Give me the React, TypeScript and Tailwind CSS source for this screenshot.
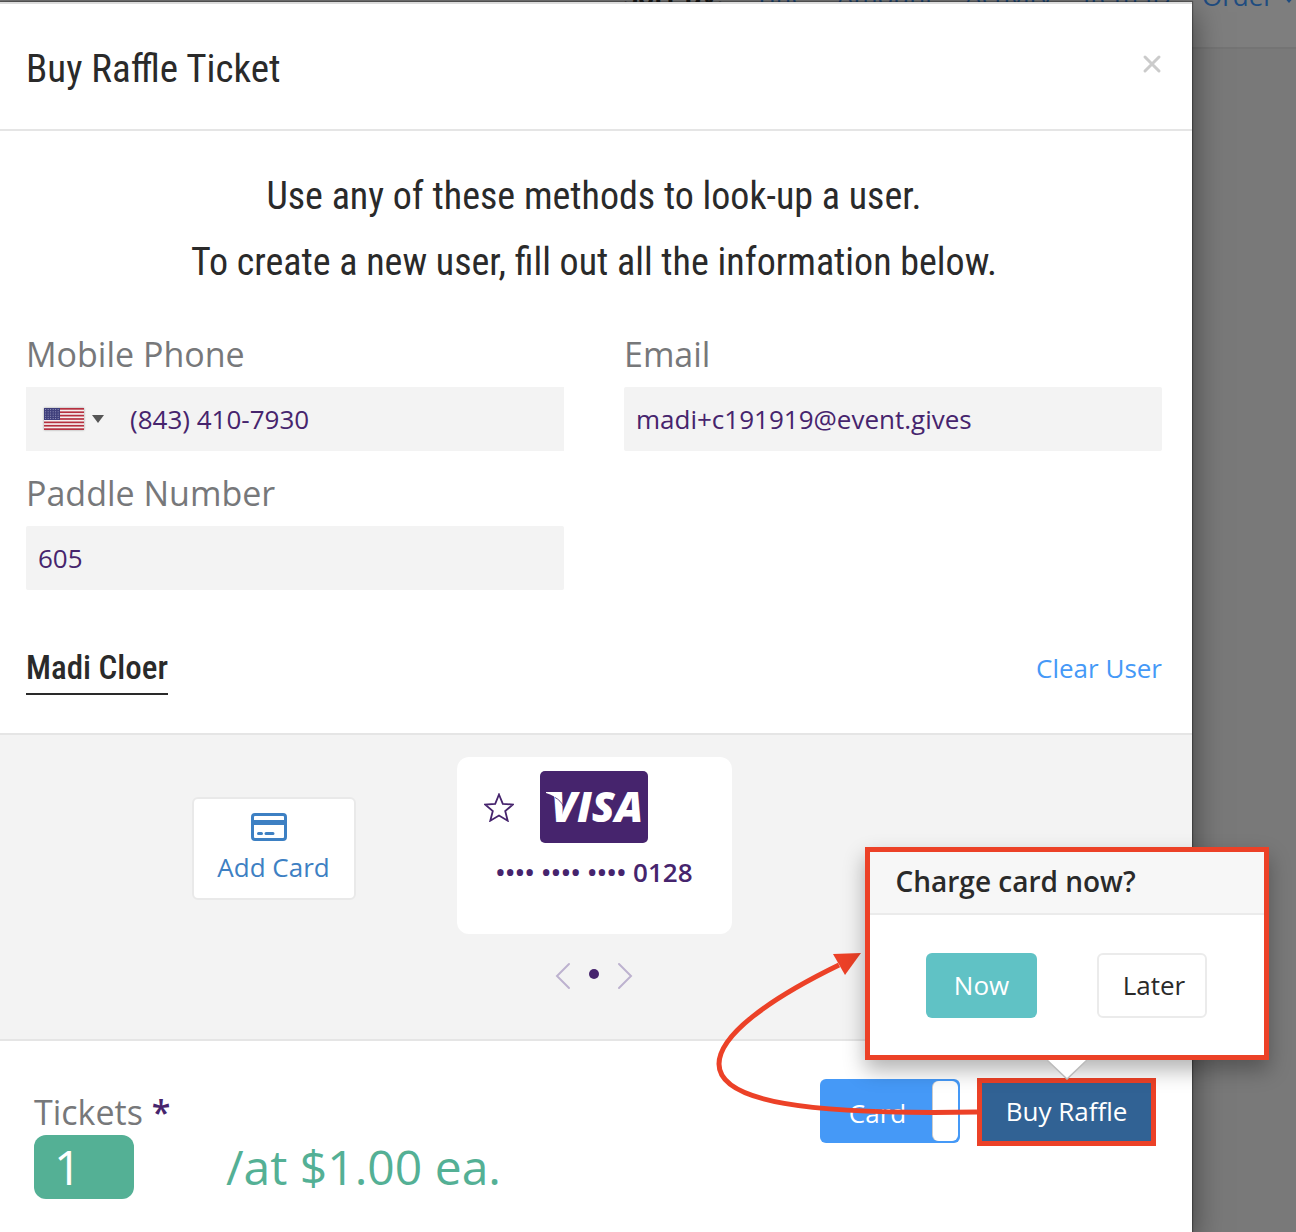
import { useState } from 'react';

const sortLinks = ['Title', 'Amount', 'Activity', 'Item ID', 'Order'];

const fieldClass = 'h-16 w-full rounded-xs bg-[#f3f3f3] px-3 text-[26px] text-[#46246d] outline-none';
const labelClass = 'block text-[34px] leading-[46px] text-[#77787a]';

function FlagUS() {
  return (
    <svg viewBox="0 0 40 22" className="h-[22px] w-10 shadow-[0_0_2px_#999]" aria-hidden="true">
      <rect width="40" height="22" fill="#f5f0f0" />
      {[0, 1, 2, 3, 4, 5, 6].map((i) => (
        <rect key={i} y={i * 3.38} width="40" height="1.7" fill="#b5303f" />
      ))}
      <rect width="16" height="12" fill="#40407c" />
      {[0, 1, 2, 3, 4].map((row) =>
        [0, 1, 2, 3, 4, 5].map((col) => (
          <circle key={`${row}-${col}`} cx={1.6 + col * 2.5} cy={1.4 + row * 2.3} r="0.5" fill="#a9a9cc" />
        ))
      )}
    </svg>
  );
}

function CardIcon() {
  return (
    <svg viewBox="0 0 36 28" className="mr-2.5 h-7 w-9" fill="none" aria-hidden="true">
      <rect x="1.5" y="1.5" width="33" height="25" rx="2.5" stroke="#3d80c3" strokeWidth="3" />
      <path d="M2 9.5h32" stroke="#3d80c3" strokeWidth="5" />
      <path d="M7.5 20.5h3M15 20.5h7" stroke="#3d80c3" strokeWidth="3" strokeLinecap="round" />
    </svg>
  );
}

function StarIcon() {
  return (
    <svg viewBox="0 0 30 29" className="h-[29px] w-[30px]" fill="none" aria-hidden="true">
      <path
        d="M15 1.5l3.8 9.3 10.2.7-7.8 6.6 2.5 9.6L15 22.5l-8.7 5.2 2.5-9.6L1 11.5l10.2-.7z"
        stroke="#46246d"
        strokeWidth="1.8"
        strokeLinejoin="miter"
      />
    </svg>
  );
}

function VisaLogo() {
  return (
    <svg viewBox="0 0 108 72" className="h-[72px] w-[108px]" role="img" aria-label="Visa">
      <rect width="108" height="72" rx="5" fill="#46246d" />
      <text x="11" y="51" fill="#fff" className="font-['Open_Sans',sans-serif] text-[42px] font-extrabold italic">
        VISA
      </text>
      <path d="M6 21h13v9c-3-4-7-6-13-8z" fill="#fff" />
      <path d="M15 26.500c4 2 6.500 5 8.500 9" stroke="#46246d" strokeWidth="0.8" fill="none" />
    </svg>
  );
}

function Chevron({ flip }: { flip?: boolean }) {
  return (
    <svg viewBox="0 0 16 28" className="h-7 w-4" fill="none" aria-hidden="true">
      <path d={flip ? 'M2 2l12 12L2 26' : 'M14 2L2 14l12 12'} stroke="#bdb2cf" strokeWidth="2" strokeLinecap="round" />
    </svg>
  );
}

export default function App() {
  const [phone, setPhone] = useState('(843) 410-7930');
  const [email, setEmail] = useState('madi+c191919@event.gives');
  const [paddle, setPaddle] = useState('605');
  const [tickets, setTickets] = useState('1');
  const [payByCard, setPayByCard] = useState(true);

  return (
    <div className="relative flex min-h-screen flex-col overflow-hidden bg-[#797979] font-['Open_Sans',sans-serif] text-[#2a2a2a]">
      {/* Page behind the modal, scrolled under the top edge */}
      <div className="absolute inset-x-0 top-0 flex h-[49px] justify-end overflow-hidden border-b-2 border-[#747474] bg-[#7e7e7e] pr-px text-[26px] leading-9">
        <div className="-mt-[22px] flex gap-[31px]">
          <span className="font-bold text-[#1a1a1a]">Sort By:</span>
          {sortLinks.map((link) => (
            <a key={link} href="#" className="text-[#1f4c80]">
              {link}
            </a>
          ))}
        </div>
        <svg viewBox="0 0 12 7" className="-mt-1 ml-[9px] h-[7px] w-3" aria-hidden="true">
          <path d="M0 0h12L6 7z" fill="#1f4c80" />
        </svg>
      </div>

      {/* Modal */}
      <div
        role="dialog"
        aria-label="Buy Raffle Ticket"
        className="relative mt-0.5 mr-[104px] flex-1 border-t-2 border-[#dcdcdc] bg-white shadow-[0_10px_30px_rgba(0,0,0,0.5),0_0_1px_1px_rgba(0,0,0,0.3)]"
      >
        {/* Header */}
        <div className="flex h-[127px] items-center justify-between border-b-2 border-[#e5e5e5] pr-[30px] pl-[26px]">
          <h1 className="pt-1.5 font-['Roboto_Condensed','Roboto',sans-serif] text-[39px]">Buy Raffle Ticket</h1>
          <button type="button" aria-label="Close" className="mb-1.5 text-[#cbcbcb]">
            <svg viewBox="0 0 20 20" className="size-5" fill="none" aria-hidden="true">
              <path d="M3 3l14 14M17 3L3 17" stroke="currentColor" strokeWidth="3" strokeLinecap="round" />
            </svg>
          </button>
        </div>

        {/* User lookup */}
        <div className="border-b-2 border-[#e5e5e5] pt-8 pr-[30px] pb-[38px] pl-[26px]">
          <p className="text-center font-['Roboto_Condensed','Roboto',sans-serif] text-[38px] leading-[66px]">
            Use any of these methods to look-up a user.
            <br />
            To create a new user, fill out all the information below.
          </p>

          <div className="mt-9 grid grid-cols-2 gap-x-[60px] gap-y-[19px]">
            <div>
              <label htmlFor="phone" className={`${labelClass} mb-2.5`}>
                Mobile Phone
              </label>
              <div className="flex h-16 items-center bg-[#f3f3f3] pl-[18px]">
                <div className="relative flex items-center gap-2">
                  <FlagUS />
                  <svg viewBox="0 0 12 8" className="h-2 w-3" aria-hidden="true">
                    <path d="M0 0h12L6 8z" fill="#555" />
                  </svg>
                  <select aria-label="Country" className="absolute inset-0 opacity-0">
                    <option>US</option>
                  </select>
                </div>
                <input
                  id="phone"
                  type="tel"
                  value={phone}
                  onChange={(e) => setPhone(e.target.value)}
                  className="ml-[26px] min-w-0 flex-1 text-[26px] text-[#46246d] outline-none"
                />
              </div>
            </div>
            <div>
              <label htmlFor="email" className={`${labelClass} mb-2.5`}>
                Email
              </label>
              <input id="email" type="email" value={email} onChange={(e) => setEmail(e.target.value)} className={fieldClass} />
            </div>
            <div>
              <label htmlFor="paddle" className={`${labelClass} mb-2.5`}>
                Paddle Number
              </label>
              <input id="paddle" type="text" value={paddle} onChange={(e) => setPaddle(e.target.value)} className={fieldClass} />
            </div>
          </div>

          <div className="mt-[53px] flex items-center justify-between">
            <h2 className="border-b-2 border-[#2a2a2a] font-['Roboto_Condensed','Roboto',sans-serif] text-[33px] leading-[50px] font-medium">
              Madi Cloer
            </h2>
            <a href="#" className="pb-0.5 text-[26px] text-[#4599f7]">
              Clear User
            </a>
          </div>
        </div>

        {/* Saved cards */}
        <div className="border-b-2 border-[#e5e5e5] bg-[#f3f3f3] pt-[22px] pr-[30px] pb-[49px] pl-[26px]">
          <div className="grid grid-cols-[1fr_275px_1fr] items-center gap-x-[101px]">
            <button
              type="button"
              className="mt-1.5 flex h-[103px] w-[164px] flex-col items-center justify-center justify-self-end rounded-md border-2 border-[#e9e9e9] bg-white text-[26px] leading-9 text-[#3d80c3]"
            >
              <CardIcon />
              <span className="mt-2">Add Card</span>
            </button>
            <div className="h-[177px] rounded-xl bg-white pt-3.5 text-center">
              <div className="flex items-center pl-[27px]">
                <button type="button" aria-label="Make default card">
                  <StarIcon />
                </button>
                <div className="ml-[26px]">
                  <VisaLogo />
                </div>
              </div>
              <p className="mt-[11px] text-[26px] leading-9 font-semibold text-[#46246d]">•••• •••• •••• 0128</p>
            </div>
          </div>
          <div className="mt-7 flex items-center justify-center gap-[18px]">
            <button type="button" aria-label="Previous card">
              <Chevron />
            </button>
            <span className="mb-1 size-2.5 rounded-full bg-[#46246d]" />
            <button type="button" aria-label="Next card">
              <Chevron flip />
            </button>
          </div>
        </div>

        {/* Footer */}
        <div className="flex items-start justify-between pt-[37px] pr-9 pl-[34px]">
          <div className="pt-[11px]">
            <label htmlFor="tickets" className={labelClass}>
              Tickets <span className="font-semibold text-[#46246d]">*</span>
            </label>
            <div className="flex items-center gap-[92px] text-[48px] text-[#54b095]">
              <input
                id="tickets"
                type="text"
                inputMode="numeric"
                value={tickets}
                onChange={(e) => setTickets(e.target.value)}
                className="h-16 w-[100px] rounded-xl bg-[#54b095] px-5 text-white outline-none"
              />
              <span className="leading-[64px]">/at $1.00 ea.</span>
            </div>
          </div>

          <div className="flex items-start gap-[17px]">
            <label className="mt-px flex h-16 w-[140px] cursor-pointer items-center rounded-md bg-[#4599f7] p-0.5 text-[26px] text-white">
              <input
                type="checkbox"
                checked={payByCard}
                onChange={(e) => setPayByCard(e.target.checked)}
                className="sr-only"
              />
              <span className="flex-1 pt-1 text-center">{payByCard ? 'Card' : 'Cash'}</span>
              <span className="h-full w-[25px] rounded-md bg-white shadow-[-1px_0_0_#ccc]" />
            </label>

            <div className="relative">
              <button
                type="button"
                className="h-[68px] w-[179px] border-5 border-[#ec4127] bg-[#316294] pb-0.5 text-[26px] text-white"
              >
                Buy Raffle
              </button>

              {/* Pointer from the button to the popover */}
              <svg
                viewBox="0 0 280 190"
                className="pointer-events-none absolute right-full bottom-4 h-[190px] w-[280px]"
                fill="none"
                aria-hidden="true"
              >
                <path d="M280 172C110 175 22 162 22 124C22 96 70 60 142 25" stroke="#ec4127" strokeWidth="5" />
                <path d="M136 14l28-1-16 22z" fill="#ec4127" />
              </svg>

              {/* Popover */}
              <div className="absolute bottom-full left-1/2 mb-[18px] w-[404px] -translate-x-1/2 border-5 border-[#ec4127] bg-white shadow-[0_10px_20px_rgba(0,0,0,0.3)]">
                <h3 className="border-b-2 border-[#ebebeb] bg-[#f7f7f7] px-[26px] pb-0.5 text-[28px] leading-[59px] font-semibold">
                  Charge card now?
                </h3>
                <div className="flex justify-center gap-[60px] pt-[38px] pb-[37px] text-[26px]">
                  <button type="button" className="h-[65px] w-[111px] rounded-md bg-[#60c2c5] text-white">
                    Now
                  </button>
                  <button type="button" className="h-[65px] w-[110px] rounded-md border-2 border-[#ebebeb] bg-white pl-1">
                    Later
                  </button>
                </div>
                <svg viewBox="0 0 40 20" className="absolute top-full left-1/2 mt-[5px] h-5 w-10 -translate-x-1/2" aria-hidden="true">
                  <path d="M0 0l20 19L40 0" fill="#fff" stroke="#bbb" strokeWidth="1.5" />
                </svg>
              </div>
            </div>
          </div>
        </div>
      </div>
    </div>
  );
}
